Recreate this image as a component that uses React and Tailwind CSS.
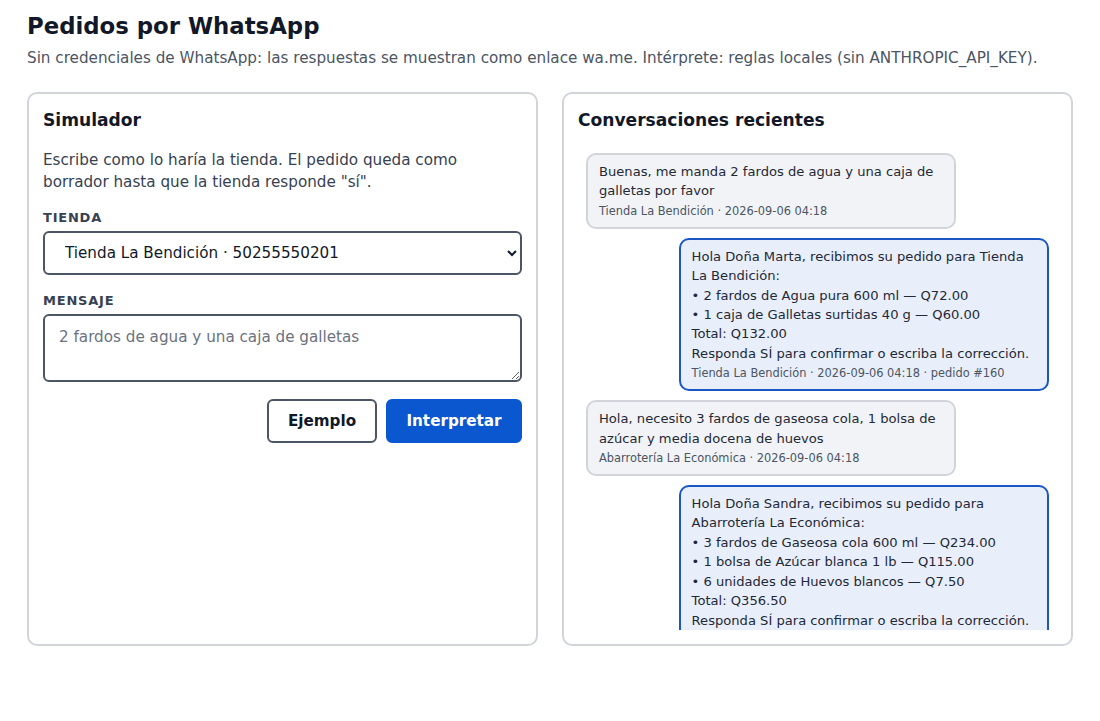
import React from "react";

const font = { fontFamily: '"DejaVu Sans", Verdana, sans-serif' };

function Bubble({ out, lines, meta }) {
  return (
    <div
      className={
        "w-[80%] rounded-[10px] border-2 px-[11px] py-[7px] text-[13.1px] leading-[19.4px] text-[#1f2937] " +
        (out
          ? "self-end border-[#1a56c4] bg-[#e8eefa]"
          : "self-start border-[#d1d5db] bg-[#f1f3f6]")
      }
    >
      {lines.map((l, i) => (
        <div key={i}>{l}</div>
      ))}
      <div className="mt-[2px] text-[11.4px] leading-[17px] text-[#4b5563]">{meta}</div>
    </div>
  );
}

export default function App() {
  return (
    <div className="min-h-[721px] bg-white px-[27px] pt-[11px] text-[#111827]" style={font}>
      <h1 className="text-[22.8px] font-bold leading-[30px] text-[#111827]">Pedidos por WhatsApp</h1>
      <p className="mt-[5px] text-[15.2px] leading-[24px] text-[#4b5563]">
        Sin credenciales de WhatsApp: las respuestas se muestran como enlace wa.me. Intérprete: reglas locales (sin ANTHROPIC_API_KEY).
      </p>
      <div className="mt-[22px] grid grid-cols-2 gap-6">
        <section className="flex h-[554px] flex-col rounded-[10px] border-2 border-[#d1d5db] p-[14px]">
          <h2 className="text-[17.1px] font-bold leading-[24px]">Simulador</h2>
          <p className="mt-[17px] text-[15.2px] leading-[22px] text-[#374151]">
            Escribe como lo haría la tienda. El pedido queda como borrador hasta que la tienda responde "sí".
          </p>
          <label className="mt-[17px] mb-[5px] text-[13px] font-bold uppercase leading-[16px] tracking-[0.06em] text-[#374151]">
            Tienda
          </label>
          <select
            className="h-[44px] w-full rounded-[6px] border-2 border-[#4b5563] bg-white pl-[16px] pr-2 text-[15.2px] text-[#111827]"
            style={font}
            defaultValue="1"
          >
            <option value="1">Tienda La Bendición · 50255550201</option>
            <option value="2">Abarrotería La Económica</option>
          </select>
          <label className="mt-[18px] mb-[5px] text-[13px] font-bold uppercase leading-[16px] tracking-[0.06em] text-[#374151]">
            Mensaje
          </label>
          <textarea
            className="h-[68px] w-full resize-y rounded-[6px] border-2 border-[#4b5563] px-[14px] py-[10px] text-[15.2px] leading-[22px] placeholder:text-[#6b7280]"
            style={font}
            placeholder="2 fardos de agua y una caja de galletas"
          />
          <div className="mt-[17px] flex justify-end gap-[9px]">
            <button className="h-[44px] w-[110px] rounded-[6px] border-2 border-[#4b5563] bg-white text-[15.2px] font-bold text-[#111827]">
              Ejemplo
            </button>
            <button className="h-[44px] w-[136px] rounded-[6px] border-2 border-[#0b57d0] bg-[#0b57d0] text-[15.2px] font-bold text-white">
              Interpretar
            </button>
          </div>
        </section>
        <section className="flex h-[554px] flex-col rounded-[10px] border-2 border-[#d1d5db] p-[14px]">
          <h2 className="text-[17.1px] font-bold leading-[24px]">Conversaciones recientes</h2>
          <div className="mt-4 flex min-h-0 flex-1 flex-col gap-[9px] overflow-hidden px-2 pt-[5px]">
            <Bubble
              lines={["Buenas, me manda 2 fardos de agua y una caja de galletas por favor"]}
              meta="Tienda La Bendición · 2026-09-06 04:18"
            />
            <Bubble
              out
              lines={[
                "Hola Doña Marta, recibimos su pedido para Tienda La Bendición:",
                "• 2 fardos de Agua pura 600 ml — Q72.00",
                "• 1 caja de Galletas surtidas 40 g — Q60.00",
                "Total: Q132.00",
                "Responda SÍ para confirmar o escriba la corrección.",
              ]}
              meta="Tienda La Bendición · 2026-09-06 04:18 · pedido #160"
            />
            <Bubble
              lines={["Hola, necesito 3 fardos de gaseosa cola, 1 bolsa de azúcar y media docena de huevos"]}
              meta="Abarrotería La Económica · 2026-09-06 04:18"
            />
            <Bubble
              out
              lines={[
                "Hola Doña Sandra, recibimos su pedido para Abarrotería La Económica:",
                "• 3 fardos de Gaseosa cola 600 ml — Q234.00",
                "• 1 bolsa de Azúcar blanca 1 lb — Q115.00",
                "• 6 unidades de Huevos blancos — Q7.50",
                "Total: Q356.50",
                "Responda SÍ para confirmar o escriba la corrección.",
              ]}
              meta="Abarrotería La Económica · 2026-09-06 04:18 · pedido #161"
            />
          </div>
        </section>
      </div>
    </div>
  );
}
